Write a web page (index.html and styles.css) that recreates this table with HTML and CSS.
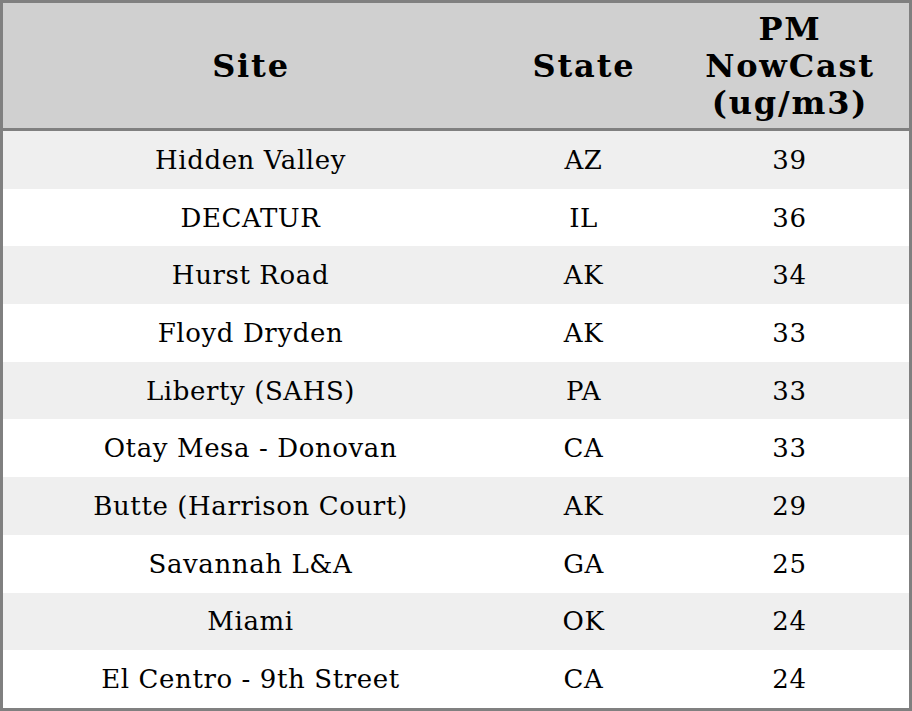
FILE: index.html
```html
<!DOCTYPE html>
<html>
<head>
<meta charset="utf-8">
<link rel="stylesheet" href="styles.css">
</head>
<body>
<table class="aq">
  <colgroup>
    <col class="c-site">
    <col class="c-state">
    <col class="c-pm">
  </colgroup>
  <thead>
    <tr>
      <th>Site</th>
      <th>State</th>
      <th>PM<br>NowCast<br>(ug/m3)</th>
    </tr>
  </thead>
  <tbody>
    <tr><td>Hidden Valley</td><td>AZ</td><td>39</td></tr>
    <tr><td>DECATUR</td><td>IL</td><td>36</td></tr>
    <tr><td>Hurst Road</td><td>AK</td><td>34</td></tr>
    <tr><td>Floyd Dryden</td><td>AK</td><td>33</td></tr>
    <tr><td>Liberty (SAHS)</td><td>PA</td><td>33</td></tr>
    <tr><td>Otay Mesa - Donovan</td><td>CA</td><td>33</td></tr>
    <tr><td>Butte (Harrison Court)</td><td>AK</td><td>29</td></tr>
    <tr><td>Savannah L&amp;A</td><td>GA</td><td>25</td></tr>
    <tr><td>Miami</td><td>OK</td><td>24</td></tr>
    <tr><td>El Centro - 9th Street</td><td>CA</td><td>24</td></tr>
  </tbody>
</table>
</body>
</html>
```
FILE: styles.css
```css
html, body {
  margin: 0;
  padding: 0;
  background: #ffffff;
}
.aq {
  width: 912px;
  table-layout: fixed;
  border-collapse: separate;
  border-spacing: 0;
  border: 3px solid #808080;
  font-family: "DejaVu Serif", serif;
  color: #000;
}
.c-site { width: 494px; }
.c-state { width: 172px; }
.c-pm { width: 240px; }
.aq th {
  box-sizing: border-box;
  height: 128px;
  padding: 2px 0 0 2px;
  background: #d0d0d0;
  border-bottom: 3px solid #808080;
  font-size: 32px;
  line-height: 37.2px;
  letter-spacing: 1.8px;
  font-weight: bold;
  text-align: center;
  vertical-align: middle;
}
.aq td {
  height: 57.7px;
  padding: 0 0 0 1px;
  font-size: 26px;
  letter-spacing: 0.6px;
  text-align: center;
  vertical-align: middle;
}
.aq tbody tr:nth-child(odd) {
  background: #efefef;
}
```
